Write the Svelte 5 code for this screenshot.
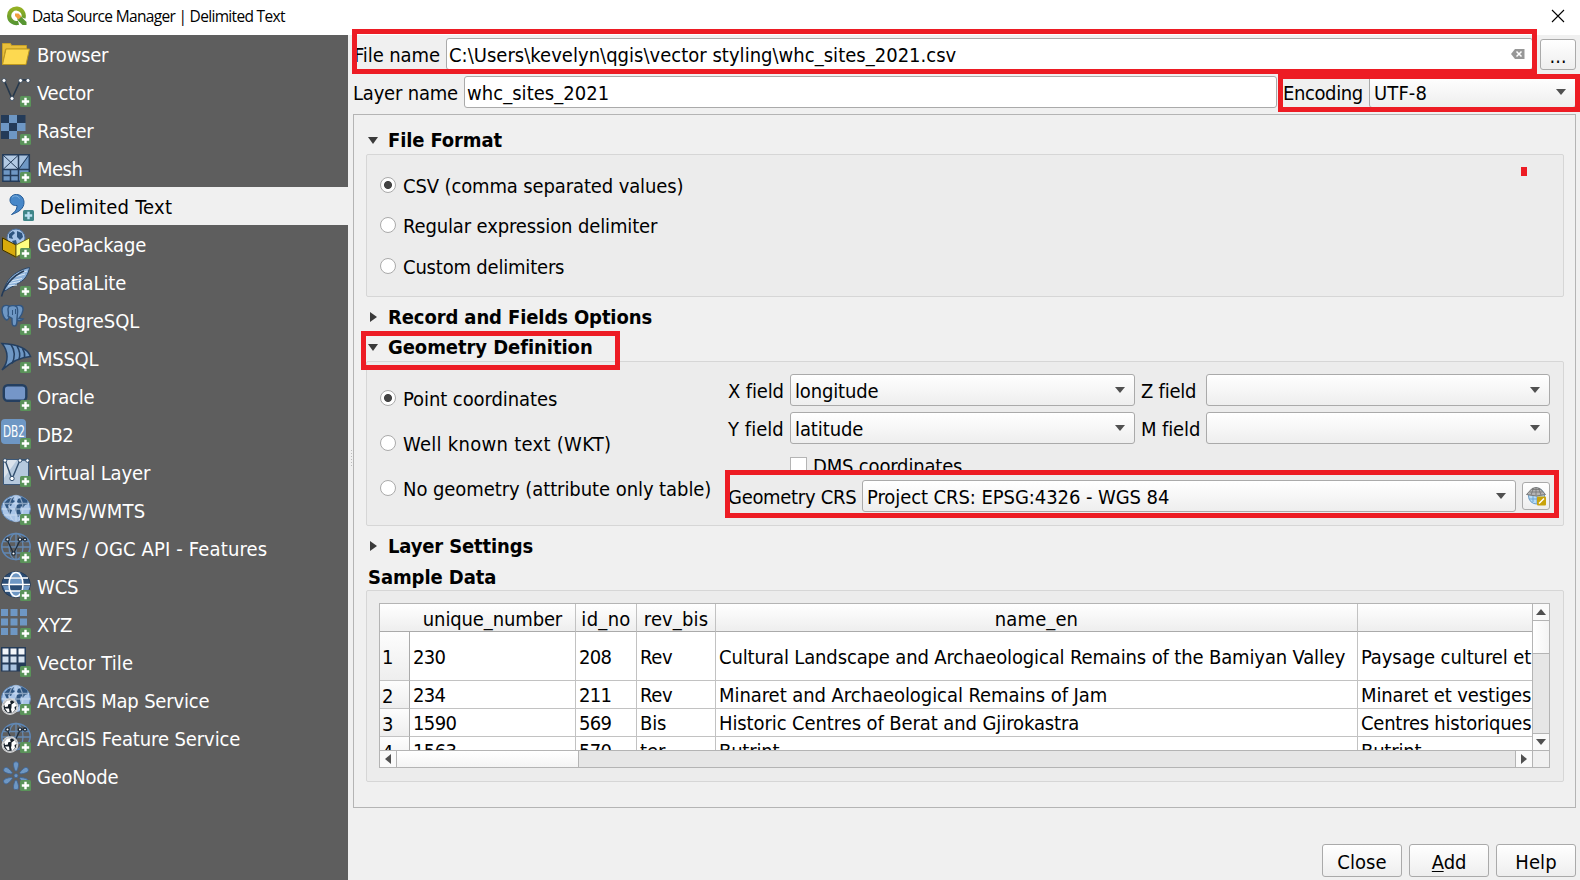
<script>
  const sources = [
    ['Browser', 72, 'folder'],
    ['Vector', 57, 'vector'],
    ['Raster', 57, 'raster'],
    ['Mesh', 46, 'mesh'],
    ['Delimited Text', 133, 'comma'],
    ['GeoPackage', 110, 'package'],
    ['SpatiaLite', 90, 'feather'],
    ['PostgreSQL', 103, 'elephant'],
    ['MSSQL', 62, 'fin'],
    ['Oracle', 58, 'oracle'],
    ['DB2', 37, 'db2'],
    ['Virtual Layer', 114, 'virtual'],
    ['WMS/WMTS', 109, 'wms'],
    ['WFS / OGC API - Features', 231, 'wfs'],
    ['WCS', 42, 'wcs'],
    ['XYZ', 36, 'xyz'],
    ['Vector Tile', 97, 'tile'],
    ['ArcGIS Map Service', 173, 'arcmap'],
    ['ArcGIS Feature Service', 204, 'arcfeature'],
    ['GeoNode', 82, 'geonode']
  ];
  const selected = 'Delimited Text';

  const rows = [
    { n: 1, h: 49, cells: [['230', 33], ['208', 33], ['Rev', 33], ['Cultural Landscape and Archaeological Remains of the Bamiyan Valley', 627], ['Paysage culturel et', 171]] },
    { n: 2, h: 28, cells: [['234', 33], ['211', 33], ['Rev', 33], ['Minaret and Archaeological Remains of Jam', 389], ['Minaret et vestiges', 171]] },
    { n: 3, h: 28, cells: [['1590', 44], ['569', 33], ['Bis', 27], ['Historic Centres of Berat and Gjirokastra', 361], ['Centres historiques', 171]] },
    { n: 4, h: 28, cells: [['1563', 44], ['570', 33], ['ter', 26], ['Butrint', 61], ['Butrint', 61]] }
  ];

  function fit(node, width) {
    const natural = node.getBoundingClientRect().width;
    node.style.letterSpacing = (width - 0.7 - natural) / node.textContent.length + 'px';
  }
</script>

{#snippet label(text, width)}<span class="t" use:fit={width}>{text}</span>{/snippet}

{#snippet land()}
  <path fill="#2f5580" d="M4 12l4-4 6-2-1 3 2 1-3 3-1 2-3-1 1 3 3 2-2 5-2-4-2-4zM18 8l4-2 5 3 1 4-3 1-2 3-2-2-1 4 1 4-3 3-2-5-1-3 2-4 2-1-2-2z" />
{/snippet}

{#snippet graticule(c)}
  <g fill="none" stroke={c} stroke-width="1.3">
    <ellipse cx="16" cy="17.5" rx="7" ry="13" />
    <path d="M16 5v25M3 12.500h26M1.500 18h29M4 24h24" />
  </g>
{/snippet}

{#snippet nodes(c, stroke)}
  <g stroke={stroke} stroke-width="1.3" fill={c}>
    <path fill="none" d="M7 10.500l6.500 14 7-14h5" />
    <circle cx="7.500" cy="10.500" r="1.700" /><circle cx="13.500" cy="24.500" r="1.700" /><circle cx="20" cy="10.500" r="1.700" /><circle cx="25" cy="10.500" r="1.500" />
  </g>
{/snippet}

{#snippet esri()}
  <circle cx="10" cy="25.600" r="7.800" fill="#3c4650" stroke="#d8d8d8" stroke-width="1.200" />
  <circle cx="10" cy="25.600" r="6.800" fill="#141d26" stroke="#fff" stroke-width=".8" />
  <path fill="#fff" d="M4 23l3-3.500 4-.5-1 2 1 1.500-3 1 0 2-3 .5zM11.500 23.500l3.500-2.500 1.500 4-2 1 .5 3-3 3-1-3.500.5-2zM5 27.500l4 0 .5 3.500-2 0z" />
{/snippet}

{#snippet icon(kind)}
  <svg class="icon" viewBox="0 0 32 38" width="32" height="38">
    {#if kind === 'folder'}
      <path fill="#e8bf3b" stroke="#c9a227" d="M2.500 29.500V8.500h8l1 2h15v3.500h-21z" />
      <path fill="#fdd950" stroke="#bd981f" d="M2.500 29.500l3.500-15.500h23.500l-3.500 15.500z" />
    {:else if kind === 'vector'}
      <path fill="none" stroke="#26384c" stroke-width="1.600" d="M4 7l8 18.500L20.500 7H28" />
      <g fill="#fff" stroke="#33465a" stroke-width=".8"><circle cx="4" cy="7.500" r="2" /><circle cx="12" cy="25.500" r="2" /><circle cx="20.500" cy="7.500" r="2" /><circle cx="28" cy="7.500" r="2" /></g>
    {:else if kind === 'raster'}
      <path fill="#6e97c4" d="M9 4h8v8H9zM1 12h8v8H1zM17 12h8.500v8H17zM9 20h8v8H9z" />
      <path fill="#243b58" d="M1 4h8v8H1zM17 4h8.500v8H17zM9 12h8v8H9zM1 20h8v8H1z" />
    {:else if kind === 'mesh'}
      <path fill="#6e97c4" d="M2 5h28v28H2z" /><path fill="#b3cae4" d="M3 6h15v14H3z" /><path fill="#a9c3e0" d="M19 6h9l-9 13z" />
      <path fill="none" stroke="#243b58" stroke-width="1.500" d="M2.800 5.800h26.500v26.500H2.800zM18.500 6v26M3 20.500h26M3 26.500h15M10.500 21v11" />
      <path fill="none" stroke="#243b58" d="M3 6l15.500 14.500M18.500 6L3 20.500M29 6L18.500 20.500" />
    {:else if kind === 'comma'}
      <path fill="#4787c8" stroke="#235a96" d="M8.500 27.500c4-3 5.500-5.500 5.500-9-3.500.5-7-1.500-7-5.500 0-3.300 2.800-5.500 6.300-5.500 4.700 0 7.700 3.500 7.700 8 0 5.500-4.500 9.500-12.500 12z" />
      <path fill="none" stroke="#7db0de" d="M9 10.500c2-2.500 6-2 7.500 1" />
    {:else if kind === 'package'}
      <path fill="#8c6c00" d="M2 12l14 7v14L2 25z" />
      <circle cx="16" cy="13" r="9" fill="#a9c5e8" stroke="#4d74a5" />
      <path fill="#2f5580" d="M9 9l4-3 2 2-3 3 1 3-4-1zM17 6l5 2 1 4-3 3-3-3zM12 16l4-1 1 4-3 1z" />
      <path fill="#d9aa0c" stroke="#3d3000" d="M2.500 13L16 20v12L2.500 25z" />
      <path fill="#ffff80" stroke="#6a6518" d="M29.500 13L16 20v12l13.500-7z" />
    {:else if kind === 'feather'}
      <path fill="#8fb4dc" stroke="#2b4666" d="M4 28C5 19 13 8 29.500 4.500c-1 6-4 12-10 15-4 3-8 4-13 7.500z" />
      <path fill="none" stroke="#d9e7f5" d="M8 23l9-1M9 20.500l11-2M11 18l11-2.500M14 14l11-3M17 11l10-3" />
      <path fill="none" stroke="#243b58" stroke-width="1.600" d="M1.500 33.500C4 24 12 13 24 8" />
    {:else if kind === 'elephant'}
      <g fill="#6e97c4" stroke="#31557f" stroke-width="1.400">
        <path d="M9 5C5 3.500 2 5 2 9c0 4 2 9 4.500 10 2 .5 2-2 3-4z" />
        <path d="M15 5c5-1.500 8.500-.5 8 4-.3 3-2 6-4 8.500l4 .5c-1.500 2-4 2-6 1z" />
        <path d="M8 8c0-4 9-5 9.500 0 .5 4-.5 7-.5 10 0 4 0 7-2.500 7S12 23 12 17.500L8 15c1-2 0-4 0-7z" />
      </g><path stroke="#31557f" d="M12.500 9v5M15.500 8v5" />
    {:else if kind === 'fin'}
      <path fill="#6e97c4" stroke="#243f60" stroke-width="1.500" d="M2 4.500c11 .5 25 3 28.500 13-8 .5-19 5-28.500 13.500C9 23 8.500 12 2 4.500z" />
      <path fill="none" stroke="#243f60" stroke-width="1.500" d="M11 5.500c4 6 4 13 1 19M17 7c3 5 3.500 9 2 13.500M22.500 9.500c2 3 2.500 6 2 9" />
    {:else if kind === 'oracle'}
      <rect x="3.800" y="8.200" width="22.500" height="15.500" rx="4" fill="#7596c8" stroke="#243f60" stroke-width="2.400" />
    {:else if kind === 'db2'}
      <rect x="1" y="4" width="25" height="25" rx="4" fill="#6e97c4" />
      <text x="3" y="22" font-size="15" textLength="22" lengthAdjust="spacingAndGlyphs" fill="#fff">DB2</text>
    {:else if kind === 'virtual'}
      <path fill="#b6c9dd" stroke="#3c5878" d="M3.500 6.500h25v25h-25z" /><path fill="#dbe3ec" d="M4 7h13L4 25z" />
      <path fill="none" stroke="#33506f" stroke-width="1.400" d="M5 7l7 19 8-19h7" />
      <g fill="#fff" stroke="#33506f"><circle cx="5" cy="7.500" r="1.800" /><circle cx="12" cy="25.500" r="2.200" /><circle cx="20" cy="7.500" r="1.800" /><circle cx="27.500" cy="7.500" r="1.800" /></g>
    {:else if kind === 'wms' || kind === 'arcmap'}
      <ellipse cx="16" cy="17.500" rx="14.500" ry="13" fill="#a9c5e8" stroke="#5d87b8" />
      {@render land()}<g opacity=".55">{@render graticule('#d4e2f3')}</g>
      {#if kind === 'arcmap'}{@render esri()}{/if}
    {:else if kind === 'wfs' || kind === 'arcfeature'}
      <ellipse cx="16" cy="17.500" rx="14.200" ry="13" fill="none" stroke="#5b86b8" stroke-width="1.500" />
      {@render graticule('#6488b0')}{@render nodes('#fff', '#1f2d3c')}
      {#if kind === 'arcfeature'}{@render esri()}{/if}
    {:else if kind === 'wcs'}
      <ellipse cx="16" cy="17.500" rx="14.300" ry="12.800" fill="#2b4d75" stroke="#243b58" />
      <path fill="#6e97c4" d="M9 11h14v6H9zM3 19h6v5H5zM23 19h7l-2 5h-5zM9 24h14l-3 6h-8zM12 5h8l2 5H10z" />
      <g fill="none" stroke="#fff" stroke-width="1.500"><ellipse cx="16" cy="17.500" rx="7" ry="12" /><path d="M4 11h24M2 17.500h28M5 24h22" /></g>
    {:else if kind === 'xyz'}
      <path fill="#6e97c4" d="M1 4h7v7H1zM10.500 4h7v7h-7zM20 4h7v7h-7zM1 13.500h7v7H1zM10.500 13.500h7v7h-7zM20 13.500h7v7h-7zM1 23h7v7H1zM10.500 23h7v7h-7z" />
    {:else if kind === 'tile'}
      <path fill="#243b58" d="M1 4h25v24.500H1z" />
      <path fill="#f3f6fa" d="M2.500 5.500h6v6h-6zM10.500 5.500h6v6h-6zM18.500 5.500h6v6h-6z" />
      <path fill="#d3e0ee" d="M2.500 13.500h6v6h-6zM10.500 13.500h6v6h-6zM18.500 13.500h6v6h-6z" />
      <path fill="#a9c3e0" d="M2.500 21.500h6v6h-6zM10.500 21.500h6v6h-6z" />
    {:else if kind === 'geonode'}
      <g fill="#6e97c4" stroke="#3f6594" stroke-width=".8">
        {#each [0, 60, 120, 180, 240, 300] as a}
          <path transform="rotate({a} 16 18.700)" d="M15.200 14c-1.700-4-2-6.500-1.500-8 .6-1.600 4-1.600 4.600 0 .5 1.500.2 4-1.500 8z" />
        {/each}
        <circle cx="16" cy="18.700" r="2" />
      </g>
    {/if}
    {#if kind !== 'folder'}
      <rect x="20" y="23" width="11" height="11" rx="1.500" fill={kind === 'comma' ? '#3f8587' : '#5a935a'} />
      <path stroke={kind === 'comma' ? '#b9dff0' : '#fff'} stroke-width="2.400" d="M25.500 24.800v7.400M21.800 28.500h7.400" />
    {/if}
  </svg>
{/snippet}

{#snippet combo(text, width)}
  <div class="combo">{#if text}{@render label(text, width)}{/if}<i class="tri down"></i></div>
{/snippet}

{#snippet radio(text, width, on)}
  <div class="radio"><i class="dot" class:on></i>{@render label(text, width)}</div>
{/snippet}

<div class="window">
  <header>
    <svg class="logo" viewBox="0 0 20 20" width="20" height="20">
      <defs><linearGradient id="q" x2="0" y2="1"><stop offset="0" stop-color="#93b023" /><stop offset="1" stop-color="#589632" /></linearGradient></defs>
      <path fill="none" stroke="url(#q)" stroke-width="4.200" d="M11.500 16.800A7.300 7.300 0 1 1 16.400 12" />
      <path fill="#589632" d="M10.500 10.500h3.500l5.500 5.500v3h-4l-5-5z" />
      <path fill="#f0a040" d="M8 7.500h3.500l3 3-3 3-3.500-3.500z" />
    </svg>
    <span class="t title" use:fit={253.5}>Data Source Manager | Delimited Text</span>
    <svg class="x" width="14" height="14" viewBox="0 0 14 14"><path stroke="#000" stroke-width="1.100" d="M1 1l12 12M13 1L1 13" /></svg>
  </header>

  <div class="body">
    <nav>
      {#each sources as [name, width, kind]}
        <div class="source" class:selected={name === selected}>{@render icon(kind)}{@render label(name, width)}</div>
      {/each}
    </nav>
    <div class="splitter"><i></i></div>

    <main>
      <div class="filerow">
        <div class="cap file">{@render label('File name', 86.7)}</div>
        <div class="input">
          {@render label('C:\\Users\\kevelyn\\qgis\\vector styling\\whc_sites_2021.csv', 508)}
          <svg width="14" height="10" viewBox="0 0 14 10"><path fill="#979797" d="M4 0h9.500v10H4L0 5z" /><path stroke="#fff" stroke-width="1.500" d="M5.500 2.500l5 5M10.500 2.500l-5 5" /></svg>
        </div>
        <div class="button browse">…</div>
      </div>
      <div class="layerrow">
        <div class="cap layer">{@render label('Layer name', 105.7)}</div>
        <div class="input">{@render label('whc_sites_2021', 143)}</div>
        <div class="cap enc">{@render label('Encoding', 80.5)}</div>
        {@render combo('UTF-8', 53.7)}
      </div>

      <section class="panel">
        <h3 class="h1"><i class="tri down"></i>{@render label('File Format', 114.7)}</h3>
        <div class="group format">
          {@render radio('CSV (comma separated values)', 281, true)}
          {@render radio('Regular expression delimiter', 255, false)}
          {@render radio('Custom delimiters', 162, false)}
        </div>
        <h3 class="h2"><i class="tri right"></i>{@render label('Record and Fields Options', 264.7)}</h3>
        <h3 class="h3"><i class="tri down"></i>{@render label('Geometry Definition', 204.7)}</h3>
        <div class="group geometry">
          <div class="modes">
            {@render radio('Point coordinates', 155, true)}
            {@render radio('Well known text (WKT)', 209, false)}
            {@render radio('No geometry (attribute only table)', 309, false)}
          </div>
          <div class="fields">
            <div class="grid">
              <div class="xy">{@render label('X field', 56.5)}</div>{@render combo('longitude', 84)}<div class="zm">{@render label('Z field', 56)}</div>{@render combo('', 0)}
              <div class="xy">{@render label('Y field', 56.5)}</div>{@render combo('latitude', 69)}<div class="zm">{@render label('M field', 60)}</div>{@render combo('', 0)}
            </div>
            <div class="dms"><i></i>{@render label('DMS coordinates', 150)}</div>
            <div class="crs">
              <div class="cap geo">{@render label('Geometry CRS', 129)}</div>
              {@render combo('Project CRS: EPSG:4326 - WGS 84', 303)}
              <div class="button pick">
                <svg width="20" height="20" viewBox="0 0 20 20">
                  <circle cx="10.500" cy="10" r="8" fill="#b7dcf7" stroke="#6699c4" />
                  <path fill="none" stroke="#6fa3cf" d="M3 13h14M7 9v7M11 9v9" />
                  <path fill="#b4b4b4" stroke="#7a7a7a" d="M.5 8.500L6 2.500Q10 .5 14 2.500l5.500 6q-9 3-19 0z" />
                  <path fill="none" stroke="#737373" stroke-width=".8" d="M3.500 6h13M5.500 3.500h9M10 1.500v8M7.500 2l-2.500 7M12.500 2l2.500 7" />
                  <rect x="11" y="10.500" width="9" height="9" rx="1" fill="#c9a30b" /><path stroke="#fff" stroke-width="1.500" d="M13 17.500l5-5" />
                </svg>
              </div>
            </div>
          </div>
        </div>
        <h3 class="h4"><i class="tri right"></i>{@render label('Layer Settings', 145.7)}</h3>
        <h3 class="h5">{@render label('Sample Data', 129)}</h3>
        <div class="group sample">
          <div class="table">
            <div class="view">
              <div class="row head">
                <div></div><div>{@render label('unique_number', 140)}</div><div>{@render label('id_no', 50)}</div><div>{@render label('rev_bis', 65)}</div><div>{@render label('name_en', 84)}</div><div></div>
              </div>
              {#each rows as r}
                <div class="row" style:height="{r.h}px">
                  <div class="num">{r.n}</div>
                  {#each r.cells as [text, width]}<div>{@render label(text, width)}</div>{/each}
                </div>
              {/each}
            </div>
            <div class="vbar"><b><i class="tri up"></i></b><em></em><b><i class="tri down"></i></b></div>
            <div class="hbar"><b><i class="tri left"></i></b><em></em><b><i class="tri right"></i></b></div>
            <div class="corner"></div>
          </div>
        </div>
      </section>

      <footer>
        <div class="button">{@render label('Close', 50)}</div>
        <div class="button"><span class="t" use:fit={35}><u>A</u>dd</span></div>
        <div class="button">{@render label('Help', 42)}</div>
      </footer>
    </main>
  </div>

  <div class="mark m1"></div>
  <div class="mark m2"></div>
  <div class="mark m3"></div>
  <div class="mark m4"></div>
  <div class="speck"></div>
</div>

<style>
  :global(body) { margin: 0; }
  .window, .window * { box-sizing: border-box; }
  .window {
    position: relative; width: 1580px; height: 880px; overflow: hidden; background: #f0f0f0; color: #000;
    font: 20px/24px "DejaVu Sans Condensed", "DejaVu Sans", sans-serif; font-stretch: condensed;
  }
  .t { white-space: pre; flex: none; }
  header { height: 35px; background: #fff; display: flex; align-items: center; padding: 0 15px 3px 7px; }
  .logo { margin-right: 5px; }
  .title { font: 15.500px/20px "Open Sans", "Noto Sans", sans-serif; }
  .x { margin-left: auto; }
  .body { display: flex; height: 845px; }
  nav { width: 348px; background: #5e5e5e; color: #fff; }
  .source { height: 38px; display: flex; align-items: center; gap: 5px; }
  .source .t { padding-top: 2px; }
  .source.selected { background: #f0f0f0; color: #000; padding-left: 3px; }
  .icon { flex: none; }
  .splitter { width: 5px; padding: 415px 0 0 3px; }
  .splitter i { display: block; width: 1px; height: 18px; background: repeating-linear-gradient(#bbb 0 1px, transparent 1px 3px); }
  main { flex: 1; min-width: 0; padding-right: 4px; }
  main .t { margin-top: 2px; }

  .cap { display: flex; flex: none; }
  .cap.file { width: 92px; }
  .cap.layer { width: 111px; }
  .cap.enc { width: 86px; margin-left: 6px; }
  .cap.geo { width: 134px; }
  .filerow { display: flex; align-items: center; height: 32px; margin-top: 3px; padding-left: 1px; }
  .filerow .input { flex: none; width: 1087px; height: 32px; }
  .filerow .input svg { margin-left: auto; margin-right: 5px; }
  .layerrow { display: flex; align-items: center; height: 32px; margin-top: 6px; }
  .layerrow .input { flex: none; width: 813px; height: 32px; }
  .layerrow .combo { flex: 1; }
  .input { display: flex; align-items: center; background: #fff; border: 1px solid #aaa; border-radius: 3px; padding: 0 2px; }
  .combo, .button { background: linear-gradient(#fff, #eee); border: 1px solid #aaa; border-radius: 3px; display: flex; align-items: center; }
  .combo { height: 32px; padding: 0 9px 0 4px; }
  .combo .tri { margin-left: auto; }
  .button { justify-content: center; height: 33px; }
  .browse { width: 36px; height: 31px; margin-left: 7px; padding-top: 3px; font-size: 19px; }

  .tri { display: block; flex: none; border: 5px solid transparent; width: 0; height: 0; }
  .tri.down { border-top: 6px solid #505050; border-bottom: 0; }
  .tri.up { border-bottom: 6px solid #505050; border-top: 0; }
  .tri.left { border-right: 6px solid #505050; border-left: 0; }
  .tri.right { border-left: 6px solid #505050; border-right: 0; }

  .panel { margin-top: 6px; height: 694px; border: 1px solid #b4b4b4; padding: 0 11px 0 12px; }
  h3 { margin: 0; font-size: 20px; font-weight: bold; line-height: 24px; display: flex; align-items: center; height: 24px; }
  h3 .t { margin-top: 0; }
  h3 .tri.down { margin: 1px 10px 0 2px; border-width: 7px 5.500px 0; border-top-color: #3a3a3a; }
  h3 .tri.right { margin: 0 11px 0 4px; border-width: 5.500px 0 5.500px 7px; border-left-color: #3a3a3a; }
  .h1 { margin-top: 13px; }
  .h2 { margin-top: 8px; }
  .h3 { margin-top: 6px; }
  .h4 { margin-top: 8px; }
  .h5 { margin-top: 7px; padding-left: 2px; }
  .group { background: #ececec; border: 1px solid #d6d6d6; border-radius: 2px; }
  .format { margin-top: 2px; height: 143px; padding: 18px 0 0 13px; display: flex; flex-direction: column; gap: 16px; }
  .format .radio:last-child { margin-top: 1px; }
  .radio { display: flex; align-items: center; height: 24px; gap: 7px; }
  .dot { width: 16px; height: 16px; border: 1px solid #aaa; border-radius: 50%; background: #fff; flex: none; }
  .dot.on { background: radial-gradient(circle, #444 0 3.600px, #fff 4.400px); }
  .geometry { margin-top: 2px; height: 165px; display: flex; padding-left: 13px; }
  .modes { flex: none; width: 348px; padding-top: 24px; display: flex; flex-direction: column; gap: 21px; }
  .fields { flex: 1; padding: 12px 0 0; }
  .grid { display: grid; grid-template-columns: 62px 345px 71px 344px; row-gap: 6px; align-items: center; }
  .xy { display: flex; }
  .zm { display: flex; padding-left: 6px; }
  .dms { display: flex; align-items: center; height: 24px; margin: 9px 0 0 62px; gap: 6px; }
  .dms i { width: 17px; height: 17px; background: #fff; border: 1px solid #b4b4b4; }
  .crs { display: flex; align-items: center; margin-top: 3px; }
  .crs .combo { width: 654px; }
  .pick { width: 28px; height: 28px; margin-left: 6px; }

  .sample { margin-top: 1px; height: 192px; padding: 12px 13px 0 12px; }
  .table { height: 165px; border: 1px solid #b4b4b4; display: grid; grid-template: 146px 17px / 1152px 17px; background: #fff; }
  .view { overflow: hidden; }
  .row { display: grid; grid-template-columns: 30px 166px 61px 79px 642px 174px; }
  .row > div { display: flex; align-items: center; padding-left: 3px; border-right: 1px solid #c2c2c2; border-bottom: 1px solid #c2c2c2; min-width: 0; overflow: hidden; }
  .row > div:last-child { border-right: 0; }
  .row .t { margin-top: 1px; }
  .row > .num { background: linear-gradient(#fdfdfd, #eee); padding-top: 2px; padding-left: 2px; border-right-color: #aaa; }
  .row.head { height: 28px; }
  .row.head > div { background: linear-gradient(#fff, #eee); justify-content: center; padding: 3px 0 0; border-bottom-color: #aaa; }
  .row.head > div:first-child { border-right: 0; }
  .row.head .t { margin-top: 0; }
  .vbar, .hbar { background: #e6e6e6; display: flex; }
  .vbar { flex-direction: column; border-left: 1px solid #b4b4b4; }
  .hbar { border-top: 1px solid #b4b4b4; }
  .corner { background: #f0f0f0; border: solid #b4b4b4; border-width: 1px 0 0 1px; }
  .vbar b, .hbar b { background: #fafafa; flex: none; display: grid; place-items: center; }
  .vbar b { height: 16px; }
  .hbar b { width: 16px; }
  .vbar em { height: 34px; background: linear-gradient(90deg, #fff, #f4f4f4); border: solid #b4b4b4; border-width: 1px 0; }
  .hbar em { width: 183px; background: linear-gradient(#fff, #f4f4f4); border: solid #b4b4b4; border-width: 0 1px; }
  .vbar b:last-child { margin-top: auto; border-top: 1px solid #b4b4b4; height: 17px; }
  .hbar b:last-child { margin-left: auto; border-left: 1px solid #b4b4b4; width: 17px; }

  footer { display: flex; justify-content: flex-end; gap: 7px; margin-top: 36px; }
  footer .button { width: 80px; }
  u { text-underline-offset: 2px; text-decoration-thickness: 1px; }

  .mark { position: absolute; border: 5px solid #ed1c24; }
  .m1 { left: 352px; top: 29px; width: 1185px; height: 45px; }
  .m2 { left: 1278px; top: 74px; width: 302px; height: 38px; }
  .m3 { left: 361px; top: 331px; width: 259px; height: 39px; }
  .m4 { left: 725px; top: 470px; width: 834px; height: 48px; }
  .speck { position: absolute; left: 1521px; top: 167px; width: 6px; height: 9px; background: #ed1c24; }
</style>
